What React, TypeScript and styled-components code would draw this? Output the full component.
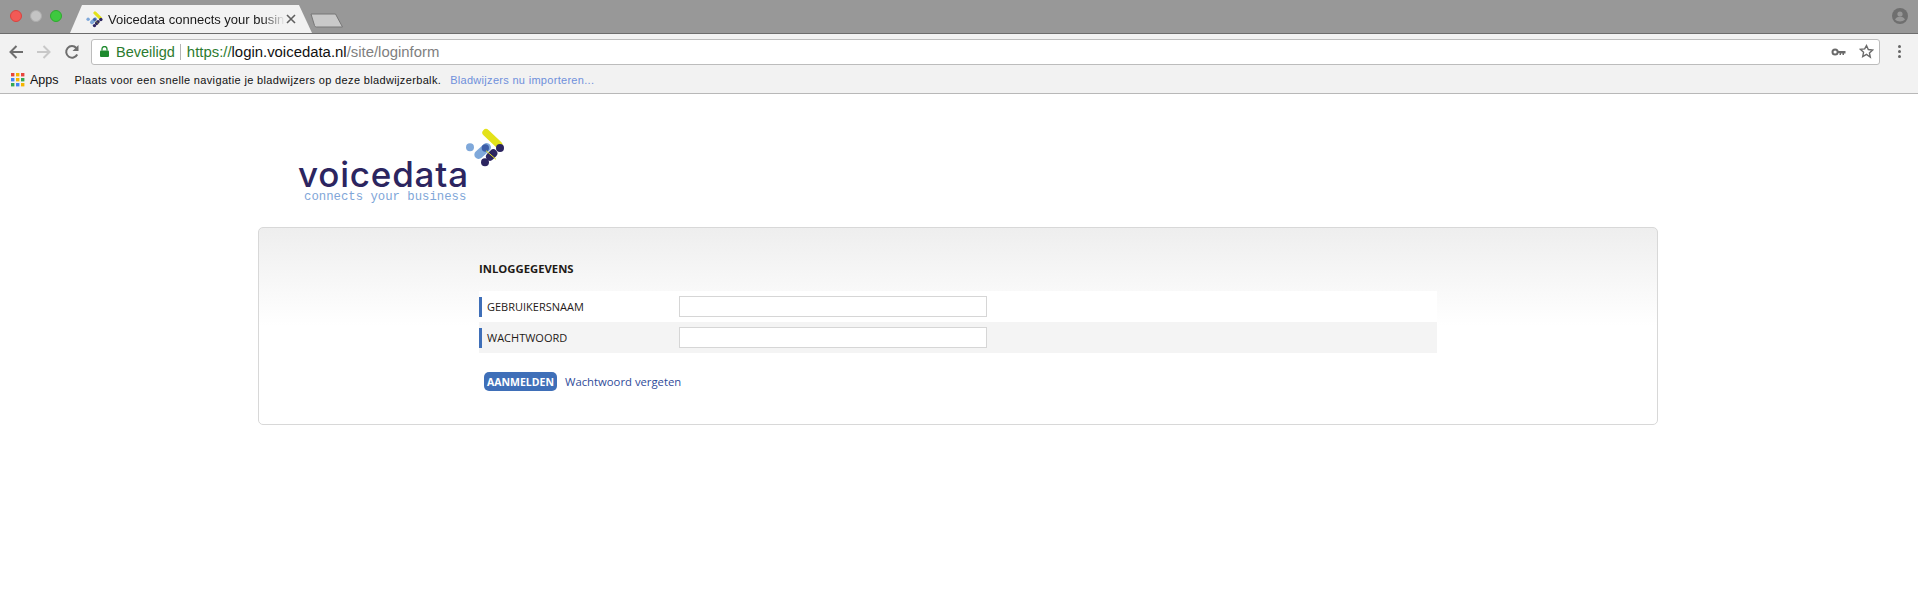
import { createGlobalStyle } from "styled-components"
import styled from "styled-components"

const GlobalStyle = createGlobalStyle`
    html, body {
        margin: 0;
        padding: 0;
        background: #fff;
    }
`

const LogoMark = ({ size }: { size: number }) => (
    <svg width={size} height={size} viewBox="555 40 120 120">
        <circle cx="570" cy="98" r="12" fill="#7fa8da" />
        <line x1="596" y1="120" x2="620" y2="98" stroke="#7fa8da" strokeWidth="26" strokeLinecap="round" />
        <line x1="618" y1="54" x2="656" y2="90" stroke="#e3e21a" strokeWidth="22" strokeLinecap="round" />
        <circle cx="616" cy="100" r="11" fill="#3d5ea8" />
        <circle cx="660" cy="100" r="12" fill="#2c2560" />
        <line x1="630" y1="126" x2="640" y2="116" stroke="#2c2560" strokeWidth="24" strokeLinecap="round" />
        <circle cx="615" cy="143" r="12" fill="#2c2560" />
        <line x1="618" y1="108" x2="648" y2="134" stroke="#e3e21a" strokeWidth="3" />
    </svg>
)

const Traffic = () => (
    <Lights>
        <Light $color="#f25a56" $edge="#d8443f" />
        <Light $color="#c4c4c4" $edge="#adadad" />
        <Light $color="#3ec93f" $edge="#2eaa2e" />
    </Lights>
)

const AppsGrid = () => {
    const colors = ["#e8453c", "#f4b400", "#e8453c", "#4285f4", "#f4b400", "#34a853", "#34a853", "#4285f4", "#f4b400"]
    return (
        <svg width="14" height="14" viewBox="0 0 14 14">
            {colors.map((c, i) => (
                <rect key={i} x={(i % 3) * 5} y={Math.floor(i / 3) * 5} width="3.4" height="3.4" fill={c} />
            ))}
        </svg>
    )
}

const App = () => (
    <>
        <GlobalStyle />
        <TabStrip>
            <Traffic />
            <Tab>
                <LogoMark size={17} />
                <TabTitle>Voicedata connects your business</TabTitle>
                <svg width="10" height="10" viewBox="0 0 10 10">
                    <path d="M1 1l8 8M9 1l-8 8" stroke="#5f5f5f" strokeWidth="1.6" />
                </svg>
            </Tab>
            <NewTab width="33" height="15" viewBox="0 0 33 15">
                <path d="M1 1h24.500l7 13H6.500a2 2 0 0 1-2-1.500z" fill="#c9c9c9" stroke="#777" strokeWidth="1" />
            </NewTab>
            <Avatar width="16" height="16" viewBox="0 0 16 16">
                <circle cx="8" cy="8" r="8" fill="#6f6f6f" />
                <circle cx="8" cy="6" r="2.600" fill="#989898" />
                <path d="M3 11.500c1-2 3-2.700 5-2.700s4 .7 5 2.700c-1.200 1.300-3 2-5 2s-3.800-.7-5-2z" fill="#989898" />
            </Avatar>
        </TabStrip>
        <Toolbar>
            <NavButtons>
                <svg width="16" height="16" viewBox="0 0 16 16">
                    <path d="M15 8H3M8.500 2L2.500 8l6 6" fill="none" stroke="#6e6e6e" strokeWidth="2" />
                </svg>
                <svg width="16" height="16" viewBox="0 0 16 16">
                    <path d="M1 8h12M7.500 2l6 6-6 6" fill="none" stroke="#c8c8c8" strokeWidth="2" />
                </svg>
                <svg width="16" height="16" viewBox="0 0 16 16">
                    <path d="M13.200 10.500A5.800 5.800 0 1 1 12.300 4" fill="none" stroke="#6e6e6e" strokeWidth="2" />
                    <path d="M14.500 1v6h-6z" fill="#6e6e6e" />
                </svg>
            </NavButtons>
            <Omnibox>
                <svg width="9" height="11" viewBox="0 0 9 11">
                    <path d="M2 4.500V3a2.500 2.500 0 0 1 5 0v1.500" fill="none" stroke="#1e8a2e" strokeWidth="1.300" />
                    <rect x="0" y="4.500" width="9" height="6.500" rx="1" fill="#1e8a2e" />
                </svg>
                <Secure>Beveiligd</Secure>
                <Divider />
                <Url>
                    <UrlScheme>https://</UrlScheme>
                    <UrlHost>login.voicedata.nl</UrlHost>
                    <UrlPath>/site/loginform</UrlPath>
                </Url>
                <OmniIcons>
                    <svg width="15" height="8" viewBox="0 0 14 8">
                        <circle cx="3.600" cy="4" r="2.600" fill="none" stroke="#6a6a6a" strokeWidth="2" />
                        <path d="M6 3h8v2.500h-1.500V7H11V5.500H9.500V7H8V5H6z" fill="#6a6a6a" />
                    </svg>
                    <svg width="15" height="15" viewBox="0 0 24 24">
                        <path d="M12 2.500l2.900 6.300 6.900.8-5.100 4.700 1.400 6.800L12 16.700l-6.100 3.400 1.400-6.800-5.100-4.700 6.900-.8z" fill="none" stroke="#6a6a6a" strokeWidth="2.200" />
                    </svg>
                </OmniIcons>
            </Omnibox>
            <Menu>
                <Dot />
                <Dot />
                <Dot />
            </Menu>
        </Toolbar>
        <Bookmarks>
            <AppsGrid />
            <AppsLabel>Apps</AppsLabel>
            <BookmarkHint>Plaats voor een snelle navigatie je bladwijzers op deze bladwijzerbalk.</BookmarkHint>
            <BookmarkLink>Bladwijzers nu importeren...</BookmarkLink>
        </Bookmarks>
        <Page>
            <Logo>
                <LogoName>voicedata</LogoName>
                <LogoTag>connects your business</LogoTag>
                <MarkSpot>
                    <LogoMark size={40} />
                </MarkSpot>
            </Logo>
            <Card>
                <SectionTitle>INLOGGEGEVENS</SectionTitle>
                <Row>
                    <RowLabel>GEBRUIKERSNAAM</RowLabel>
                    <Field type="text" />
                </Row>
                <Row $shaded>
                    <RowLabel>WACHTWOORD</RowLabel>
                    <Field type="password" />
                </Row>
                <Actions>
                    <Submit>AANMELDEN</Submit>
                    <Forgot>Wachtwoord vergeten</Forgot>
                </Actions>
            </Card>
        </Page>
    </>
)

export default App

const TabStrip = styled.div`
    display: flex;
    align-items: flex-end;
    height: 33px;
    background: #989898;
    border-bottom: 1px solid #6c6c6c;
    font-family: "Liberation Sans", Arial, sans-serif;
`

const Lights = styled.div`
    display: flex;
    gap: 8px;
    align-self: flex-start;
    padding: 10px 0 0 10px;
    width: 60px;
`

const Light = styled.span<{ $color: string; $edge: string }>`
    width: 12px;
    height: 12px;
    box-sizing: border-box;
    border-radius: 50%;
    background: ${p => p.$color};
    border: 1px solid ${p => p.$edge};
`

const Tab = styled.div`
    display: flex;
    align-items: center;
    box-sizing: border-box;
    width: 242px;
    height: 28px;
    padding: 0 16px 0 16px;
    background: #f2f2f2;
    clip-path: polygon(0 100%, 12px 0, 229px 0, 242px 100%);
`

const TabTitle = styled.span`
    flex: 1;
    margin-left: 5px;
    overflow: hidden;
    white-space: nowrap;
    font-size: 13px;
    color: #1a1a1a;
    -webkit-mask-image: linear-gradient(to right, #000 155px, transparent 177px);
    mask-image: linear-gradient(to right, #000 155px, transparent 177px);
`

const NewTab = styled.svg`
    margin: 0 0 5px -2px;
`

const Avatar = styled.svg`
    margin-left: auto;
    margin-right: 10px;
    align-self: flex-start;
    margin-top: 8px;
`

const Toolbar = styled.div`
    display: flex;
    align-items: center;
    box-sizing: border-box;
    height: 31px;
    padding-top: 4px;
    background: #f2f2f2;
    font-family: "Liberation Sans", Arial, sans-serif;
`

const NavButtons = styled.div`
    display: flex;
    gap: 12px;
    width: 91px;
    box-sizing: border-box;
    padding-left: 8px;
`

const Omnibox = styled.div`
    display: flex;
    align-items: center;
    box-sizing: border-box;
    width: 1789px;
    height: 26px;
    padding: 0 5px 0 8px;
    background: #fff;
    border: 1px solid #bcbcbc;
    border-radius: 3px;
`

const Secure = styled.span`
    margin-left: 7px;
    font-size: 14.5px;
    color: #2c7b2f;
`

const Divider = styled.span`
    width: 1px;
    height: 16px;
    margin: 0 6px 0 5px;
    background: #b5b5b5;
`

const Url = styled.span`
    font-size: 14.9px;
    white-space: nowrap;
`

const UrlScheme = styled.span`
    color: #2c7b2f;
`

const UrlHost = styled.span`
    color: #111;
`

const UrlPath = styled.span`
    color: #808080;
`

const OmniIcons = styled.div`
    display: flex;
    align-items: center;
    gap: 13px;
    margin-left: auto;
`

const Menu = styled.div`
    display: flex;
    flex-direction: column;
    align-items: center;
    gap: 2px;
    margin-left: 18px;
`

const Dot = styled.span`
    width: 3px;
    height: 3px;
    border-radius: 50%;
    background: #666;
`

const Bookmarks = styled.div`
    display: flex;
    align-items: center;
    box-sizing: border-box;
    height: 29px;
    padding: 1px 0 0 11px;
    background: #f2f2f2;
    border-bottom: 1px solid #b8b8b8;
    font-family: "Liberation Sans", Arial, sans-serif;
`

const AppsLabel = styled.span`
    margin-left: 5px;
    font-size: 12.5px;
    color: #111;
`

const BookmarkHint = styled.span`
    margin-left: 16px;
    font-size: 11px;
    letter-spacing: 0.35px;
    color: #111;
`

const BookmarkLink = styled.span`
    margin-left: 9px;
    font-size: 11px;
    letter-spacing: 0.3px;
    color: #6f90db;
`

const Page = styled.div`
    font-family: "Open Sans", Arial, sans-serif;
`

const Logo = styled.div`
    position: relative;
    display: flex;
    flex-direction: column;
    width: 170px;
    height: 133px;
    box-sizing: border-box;
    margin-left: 298px;
    padding-top: 62px;
`

const LogoName = styled.div`
    font-family: "Inter", sans-serif;
    font-size: 35px;
    line-height: 36px;
    font-weight: 500;
    letter-spacing: 0.8px;
    color: #2c2560;
`

const LogoTag = styled.div`
    margin-left: 6px;
    font-family: "Liberation Mono", monospace;
    font-size: 12.3px;
    line-height: 11px;
    white-space: nowrap;
    color: #7fa6d8;
`

const MarkSpot = styled.div`
    position: absolute;
    left: 167px;
    top: 34px;
`

const Card = styled.div`
    box-sizing: border-box;
    width: 1400px;
    height: 198px;
    margin-left: 258px;
    padding: 32px 0 0 220px;
    border: 1px solid #d8d8d8;
    border-radius: 5px;
    background: linear-gradient(to bottom, #eeeeee 0, #ffffff 98px);
`

const SectionTitle = styled.div`
    height: 31px;
    font-size: 11.3px;
    line-height: 18px;
    font-weight: 700;
    color: #1f1a17;
`

const Row = styled.div<{ $shaded?: boolean }>`
    display: flex;
    align-items: center;
    box-sizing: border-box;
    width: 958px;
    height: 31px;
    background: ${p => (p.$shaded ? "#f4f4f4" : "#ffffff")};
`

const RowLabel = styled.div`
    box-sizing: border-box;
    width: 200px;
    height: 20px;
    padding-left: 5px;
    border-left: 3px solid #3f6fb8;
    font-size: 11px;
    line-height: 19px;
    color: #1f1a17;
`

const Field = styled.input`
    box-sizing: border-box;
    width: 308px;
    height: 21px;
    margin: 0;
    padding: 0;
    border: 1px solid #d6d6d6;
    background: #fff;
`

const Actions = styled.div`
    display: flex;
    align-items: center;
    gap: 8px;
    margin: 19px 0 0 5px;
`

const Submit = styled.button`
    width: 73px;
    height: 19px;
    padding: 0;
    border: 0;
    border-radius: 5px;
    background: #3f6fb8;
    color: #fff;
    font-family: "Open Sans", Arial, sans-serif;
    font-size: 10.5px;
    font-weight: 700;
`

const Forgot = styled.a`
    font-size: 11.3px;
    color: #2f4b9a;
`
